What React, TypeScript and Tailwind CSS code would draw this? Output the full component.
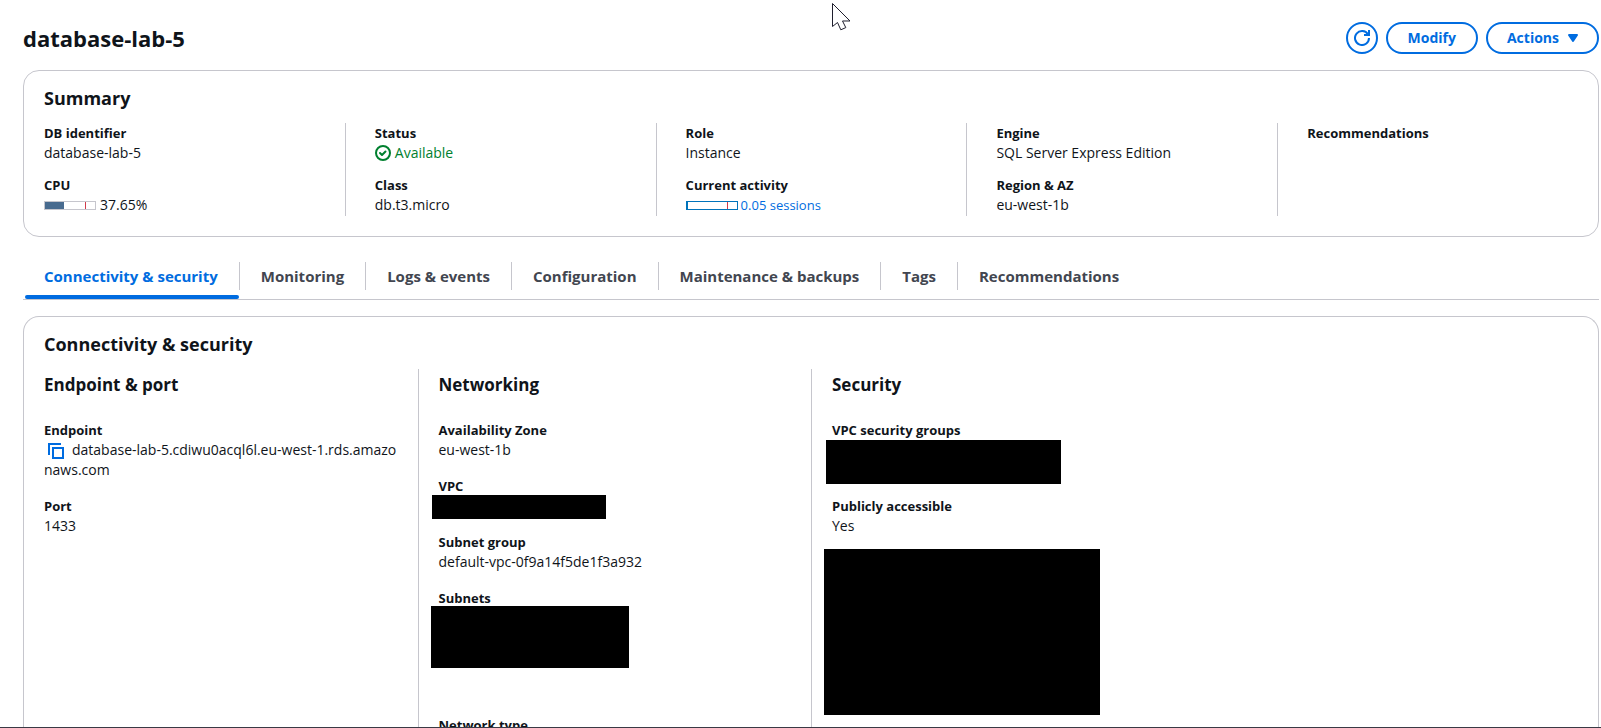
import type { ReactNode } from "react";

const stroke = { fill: "none", stroke: "currentColor", strokeWidth: 2 } as const;

function RefreshIcon() {
  return (
    <svg viewBox="0 0 16 16" className="size-4" aria-hidden="true" {...stroke}>
      <path d="M15 8a7 7 0 1 1-1-3.6" />
      <path d="M10 5h5V0" />
    </svg>
  );
}

function CaretIcon() {
  return (
    <svg viewBox="0 0 16 16" className="size-4" aria-hidden="true" fill="currentColor" stroke="currentColor" strokeWidth="2" strokeLinejoin="round">
      <path d="M4 5h8l-4 6z" />
    </svg>
  );
}

function CheckIcon() {
  return (
    <svg viewBox="0 0 16 16" className="size-4" aria-hidden="true" {...stroke}>
      <circle cx="8" cy="8" r="7" />
      <path d="m5 8 2 2 3.5-3.5" strokeLinejoin="round" strokeLinecap="round" />
    </svg>
  );
}

function CopyIcon() {
  return (
    <svg viewBox="0 0 16 16" className="size-4" aria-hidden="true" {...stroke}>
      <path d="M1 12V1h12" />
      <rect x="5" y="5" width="10" height="10" />
    </svg>
  );
}

function Field({ label, children }: { label: string; children?: ReactNode }) {
  return (
    <div>
      <dt className="text-[13px] leading-5 font-bold">{label}</dt>
      {children && <dd>{children}</dd>}
    </div>
  );
}

function Meter({ percent, frame, fill }: { percent: number; frame: string; fill: string }) {
  return (
    <span className={`relative block h-[9px] w-[52px] border ${frame}`}>
      <span className={`block h-full ${fill}`} style={{ width: `${percent}%` }} />
      <span className="absolute inset-y-0 left-4/5 w-px bg-[#d13b4b]" />
    </span>
  );
}

function Masked({ slot, box }: { slot: string; box: string }) {
  return (
    <div className={`relative ${slot}`}>
      <div className={`absolute bg-black ${box}`} />
    </div>
  );
}

const tabs = [
  "Connectivity & security",
  "Monitoring",
  "Logs & events",
  "Configuration",
  "Maintenance & backups",
  "Tags",
  "Recommendations",
];

function SummaryColumn({ first, children }: { first?: boolean; children: ReactNode }) {
  return (
    <dl className={`flex flex-col gap-3 pb-px ${first ? "pl-2.5" : "border-l border-[#c6c6cd] pl-[29px]"}`}>
      {children}
    </dl>
  );
}

function DetailColumn({ title, first, children }: { title: string; first?: boolean; children: ReactNode }) {
  return (
    <section className={`px-5 pt-1 ${first ? "" : "border-l border-[#c6c6cd]"}`}>
      <h3 className="mb-[23px] text-[17px] leading-6 font-bold">{title}</h3>
      <dl className="flex flex-col gap-4">{children}</dl>
    </section>
  );
}

export default function App() {
  return (
    <div className="flex h-screen flex-col overflow-hidden border-b border-[#3a3a44] bg-white pr-0.5 pl-[23px] font-['Open_Sans','Noto_Sans',sans-serif] text-sm leading-5 text-[#0f141a]">
      <header className="flex shrink-0 items-center justify-between pt-[22px] pb-4">
        <h1 className="text-[22px] leading-8 font-bold">database-lab-5</h1>
        <div className="flex gap-2 font-bold text-[#006ce0]">
          <button type="button" aria-label="Refresh" className="flex size-8 items-center justify-center rounded-full border-2 border-[#006ce0]">
            <RefreshIcon />
          </button>
          <button type="button" className="h-8 rounded-full border-2 border-[#006ce0] px-5">Modify</button>
          <button type="button" className="flex h-8 items-center gap-1.5 rounded-full border-2 border-[#006ce0] pr-4 pl-[19px]">
            Actions
            <CaretIcon />
          </button>
        </div>
      </header>

      <section className="shrink-0 rounded-2xl border border-[#c6c6cd] px-2.5 pt-[15px] pb-5">
        <h2 className="mb-[13px] px-2.5 text-lg leading-6 font-bold">Summary</h2>
        <div className="grid grid-cols-5">
          <SummaryColumn first>
            <Field label="DB identifier">database-lab-5</Field>
            <Field label="CPU">
              <span className="flex items-center gap-1">
                <Meter percent={38} frame="border-[#c6c6cd]" fill="bg-[#486b8f]" />
                37.65%
              </span>
            </Field>
          </SummaryColumn>
          <SummaryColumn>
            <Field label="Status">
              <span className="flex items-center gap-1 text-[#00802f]">
                <CheckIcon />
                Available
              </span>
            </Field>
            <Field label="Class">db.t3.micro</Field>
          </SummaryColumn>
          <SummaryColumn>
            <Field label="Role">Instance</Field>
            <Field label="Current activity">
              <a href="#sessions" className="flex items-center gap-[3px] text-[13px] leading-5 text-[#006ce0]">
                <Meter percent={2} frame="border-[#0073bb]" fill="bg-[#0073bb]" />
                0.05 sessions
              </a>
            </Field>
          </SummaryColumn>
          <SummaryColumn>
            <Field label="Engine">SQL Server Express Edition</Field>
            <Field label="Region &amp; AZ">eu-west-1b</Field>
          </SummaryColumn>
          <SummaryColumn>
            <Field label="Recommendations" />
          </SummaryColumn>
        </div>
      </section>

      <div role="tablist" className="mt-[18px] flex shrink-0 border-b border-[#c6c6cd]">
        {tabs.map((tab, i) => (
          <button
            key={tab}
            type="button"
            role="tab"
            aria-selected={i === 0}
            className={`relative pt-[7px] pb-[9px] text-[15px] leading-7 font-bold ${i === 0 ? "text-[#006ce0]" : "text-[#424650]"}`}
          >
            <span className={`block px-[21px] ${i < tabs.length - 1 ? "border-r border-[#c6c6cd]" : ""}`}>{tab}</span>
            {i === 0 && <span className="absolute right-px bottom-0 left-0.5 h-1 rounded-sm bg-[#006ce0]" />}
          </button>
        ))}
      </div>

      <section className="mt-4 flex grow flex-col rounded-t-2xl border border-b-0 border-[#c6c6cd] pt-[15px]">
        <h2 className="mb-[13px] px-5 text-lg leading-6 font-bold">Connectivity &amp; security</h2>
        <div className="grid grow grid-cols-4">
          <DetailColumn title="Endpoint &amp; port" first>
            <Field label="Endpoint">
              <span className="break-all">
                <button type="button" aria-label="Copy endpoint" className="mr-2 ml-1 inline-block size-4 align-middle text-[#006ce0]">
                  <CopyIcon />
                </button>
                database-lab-5.cdiwu0acql6l.eu-west-1.rds.amazonaws.com
              </span>
            </Field>
            <Field label="Port">1433</Field>
          </DetailColumn>
          <DetailColumn title="Networking">
            <Field label="Availability Zone">eu-west-1b</Field>
            <Field label="VPC">
              <Masked slot="h-5" box="-top-px -left-[7px] h-6 w-[174px]" />
            </Field>
            <Field label="Subnet group">default-vpc-0f9a14f5de1f3a932</Field>
            <Field label="Subnets">
              <Masked slot="h-[91px]" box="-top-0.5 -left-2 h-[62px] w-[198px]" />
            </Field>
            <Field label="Network type" />
          </DetailColumn>
          <DetailColumn title="Security">
            <Field label="VPC security groups">
              <Masked slot="h-10" box="top-0 -left-1.5 h-11 w-[235px]" />
            </Field>
            <Field label="Publicly accessible">Yes</Field>
            <Masked slot="h-40" box="-top-[3px] -left-2 h-[166px] w-[276px]" />
          </DetailColumn>
        </div>
      </section>

      <svg className="pointer-events-none absolute top-[3px] left-[832px] h-7 w-[19px]" viewBox="0 0 19 28" aria-hidden="true">
        <path d="M.5.5v23l5-4 3.3 7.3 5-2.2-3.3-6.6h7.5z" fill="#fff" stroke="#1f1f2e" />
      </svg>
    </div>
  );
}
